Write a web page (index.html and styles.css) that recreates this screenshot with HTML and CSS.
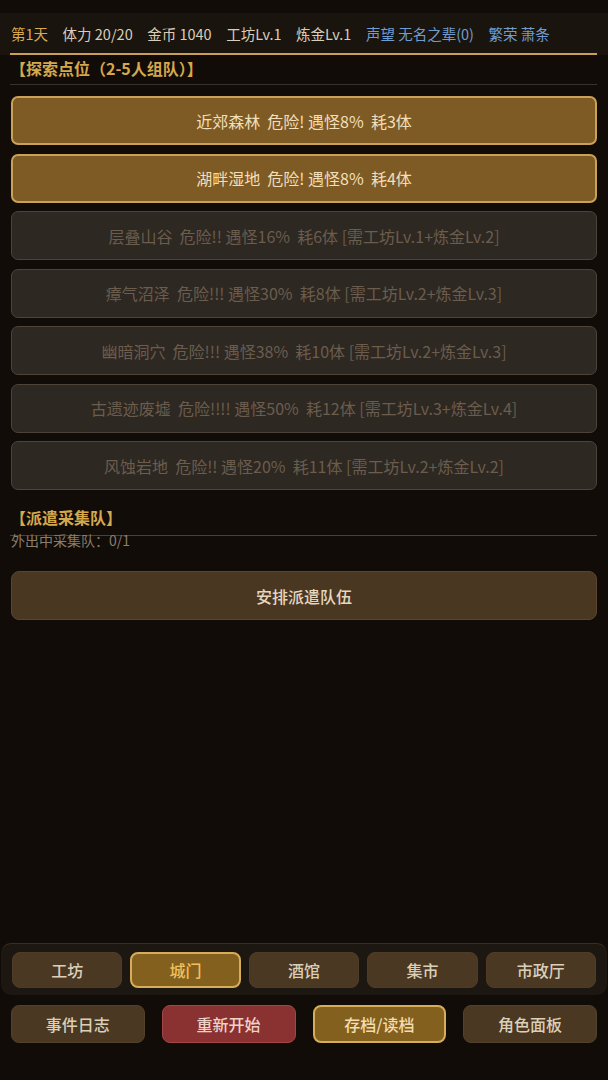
FILE: index.html
```html
<!DOCTYPE html>
<html lang="zh-CN">
<head>
<meta charset="utf-8">
<title>城门</title>
<link rel="stylesheet" href="styles.css">
</head>
<body>
<header class="topbar">
  <div class="stats">
    <span class="day">第1天</span>
    <span>体力 20/20</span>
    <span>金币 1040</span>
    <span>工坊Lv.1</span>
    <span>炼金Lv.1</span>
    <span class="blue">声望 无名之辈(0)</span>
    <span class="blue">繁荣 萧条</span>
  </div>
</header>
<main class="main">
  <div class="sec-title">【探索点位（2-5人组队）】</div>
  <div class="spots">
    <button class="spot on">近郊森林  危险! 遇怪8%  耗3体</button>
    <button class="spot on">湖畔湿地  危险! 遇怪8%  耗4体</button>
    <button class="spot off">层叠山谷  危险!! 遇怪16%  耗6体 [需工坊Lv.1+炼金Lv.2]</button>
    <button class="spot off">瘴气沼泽  危险!!! 遇怪30%  耗8体 [需工坊Lv.2+炼金Lv.3]</button>
    <button class="spot off">幽暗洞穴  危险!!! 遇怪38%  耗10体 [需工坊Lv.2+炼金Lv.3]</button>
    <button class="spot off">古遗迹废墟  危险!!!! 遇怪50%  耗12体 [需工坊Lv.3+炼金Lv.4]</button>
    <button class="spot off">风蚀岩地  危险!! 遇怪20%  耗11体 [需工坊Lv.2+炼金Lv.2]</button>
  </div>
  <div class="sec-title sec2">【派遣采集队】</div>
  <div class="note">外出中采集队：0/1</div>
  <button class="dispatch">安排派遣队伍</button>
</main>
<footer class="footer">
  <nav class="nav">
    <button class="nbtn">工坊</button>
    <button class="nbtn active">城门</button>
    <button class="nbtn">酒馆</button>
    <button class="nbtn">集市</button>
    <button class="nbtn">市政厅</button>
  </nav>
  <div class="actions">
    <button class="abtn">事件日志</button>
    <button class="abtn red">重新开始</button>
    <button class="abtn gold">存档/读档</button>
    <button class="abtn">角色面板</button>
  </div>
</footer>
</body>
</html>
```
FILE: styles.css
```css
* { box-sizing: border-box; }
html, body { margin: 0; padding: 0; }
body {
  width: 608px;
  height: 1080px;
  background: #110c08;
  font-family: "Noto Sans CJK SC", "Noto Sans", sans-serif;
  color: #d8ccb8;
  display: flex;
  flex-direction: column;
  overflow: hidden;
}
button {
  font-family: inherit;
  cursor: pointer;
  margin: 0;
}
.topbar {
  margin-top: 13px;
  background: #1a140e;
  padding: 0 11px 0 10px;
}
.stats {
  height: 42px;
  display: flex;
  align-items: center;
  gap: 14.5px;
  padding-left: 1px;
  font-size: 14.5px;
  color: #d9cdb9;
  border-bottom: 2px solid #c9a055;
  white-space: nowrap;
}
.stats .day { color: #d9aa4e; }
.stats .blue { color: #6f9dd0; }

.main {
  padding: 0 11px 0 10px;
}
.sec-title {
  font-size: 16px;
  font-weight: 700;
  color: #d6a84c;
  line-height: 22px;
  padding: 2px 0 5px 0;
  border-bottom: 1px solid #3a3128;
}
.spots {
  margin-top: 11px;
  padding-left: 1px;
  display: flex;
  flex-direction: column;
  gap: 8.5px;
}
.spot {
  height: 49px;
  border-radius: 7px;
  font-size: 16px;
  white-space: pre;
  text-align: center;
}
.spot.on {
  background: #7e5b25;
  border: 2px solid #c9a258;
  color: #f1dfba;
}
.spot.off {
  background: #2e2822;
  border: 1px solid #4d4339;
  color: #6a5d4d;
}
.sec2 {
  margin-top: 14px;
  padding-bottom: 7px;
  border-bottom-color: #4a4036;
}
.note {
  margin-top: -4px;
  padding-left: 1px;
  font-size: 14px;
  line-height: 16px;
  color: #8a7d6b;
}
.dispatch {
  display: block;
  width: calc(100% - 1px);
  margin: 23px 0 0 1px;
  height: 49px;
  border-radius: 8px;
  background: #4a3722;
  border: 1px solid #5a462f;
  color: #e6d8c0;
  font-size: 16px;
  font-weight: 500;
}

.footer {
  margin-top: auto;
  padding-bottom: 37px;
}
.nav {
  margin: 0 1px;
  background: #1d1711;
  border-top: 1px solid #3a2e22;
  border-radius: 10px;
  padding: 8px 11px 7px;
  display: grid;
  grid-template-columns: repeat(5, 1fr);
  gap: 8px;
}
.nbtn {
  height: 36px;
  border-radius: 8px;
  background: #4a3823;
  border: 1px solid #4f3c27;
  color: #dccfb7;
  font-size: 16px;
  font-weight: 500;
}
.nbtn.active {
  background: #84601f;
  border: 2px solid #d6ad5a;
  color: #f0c05c;
}
.actions {
  margin-top: 10px;
  padding: 0 11px;
  display: grid;
  grid-template-columns: repeat(4, 1fr);
  gap: 17px;
}
.abtn {
  height: 38px;
  border-radius: 8px;
  background: #4a3823;
  border: 1px solid #54412b;
  color: #dccfb7;
  font-size: 16px;
  font-weight: 500;
}
.abtn.red {
  background: #8a3232;
  border-color: #a54646;
  color: #eed2c8;
}
.abtn.gold {
  background: #84601f;
  border: 2px solid #d6ad5a;
  color: #f3dcae;
}
```
